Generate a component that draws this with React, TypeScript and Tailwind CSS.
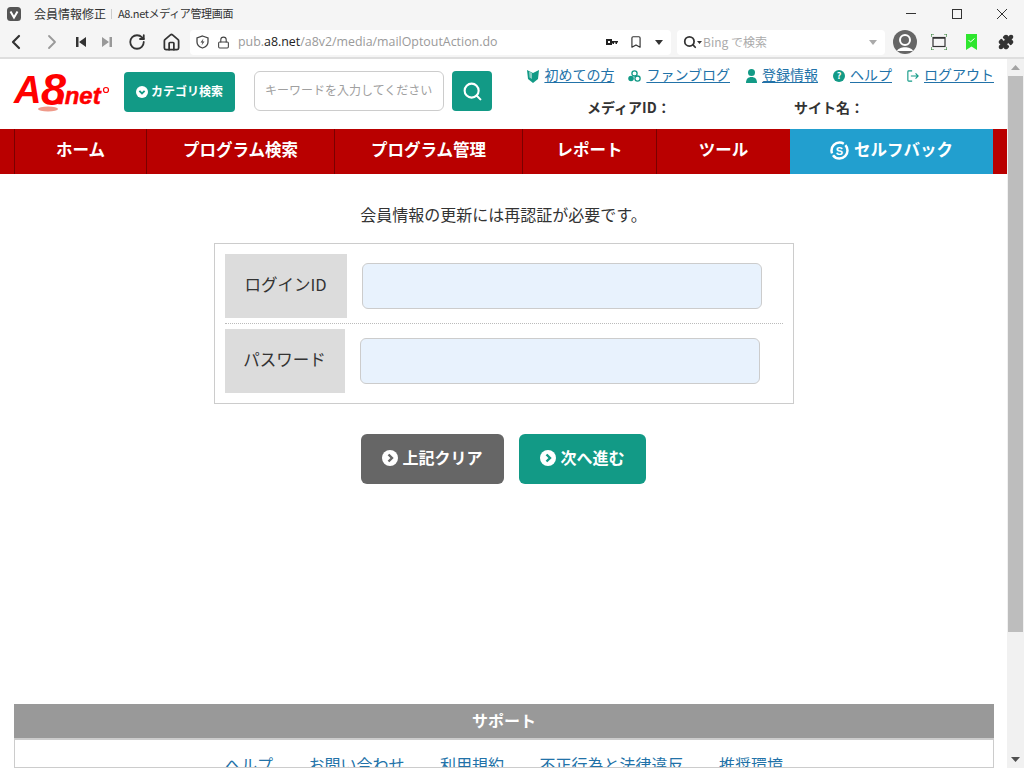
import { ChevronLeft, ChevronRight, Home, RotateCw, Lock, Search, Bookmark, Puzzle } from "lucide-react";

const jp = { fontFamily: '"Noto Sans CJK JP", "Noto Sans", sans-serif' };

const navItems = [
  { label: "ホーム", width: "w-[132px]" },
  { label: "プログラム検索", width: "w-[188px]" },
  { label: "プログラム管理", width: "w-[188px]" },
  { label: "レポート", width: "w-[134px]" },
  { label: "ツール", width: "w-[134px]" },
];

const CircleChevron = ({ down, size = 16, color }: { down?: boolean; size?: number; color: string }) => (
  <svg width={size} height={size} viewBox="0 0 16 16" className="shrink-0">
    <circle cx="8" cy="8" r="8" fill="#fff" />
    <path d={down ? "M4.5 6.5 8 10l3.5-3.5" : "M6.5 4.5 10 8l-3.5 3.5"} fill="none" stroke={color} strokeWidth="2.4" />
  </svg>
);

const BrowserBar = () => (
  <div className="h-[59px] shrink-0 bg-[#f5f5f5] border-b-2 border-[#dedede] flex flex-col">
    {/* title row */}
    <div className="h-[29px] pb-[2px] flex items-center relative">
      <svg width="14" height="14" viewBox="0 0 14 14" className="ml-[7px]">
        <rect width="14" height="14" rx="3.5" fill="#555" />
        <path d="M3.5 4.5 7 10.5l3.5-6" fill="none" stroke="#fff" strokeWidth="2" />
      </svg>
      <span className="ml-[13px] text-[12px] text-[#333] leading-none" style={jp}>会員情報修正</span>
      <span className="ml-[5px] h-[10px] w-px bg-[#ccc]" />
      <span className="ml-[6px] text-[11px] tracking-[-0.35px] text-[#333] leading-none" style={jp}>A8.netメディア管理画面</span>
      <div className="ml-auto flex items-center">
        <div className="w-[10px] h-px bg-[#333] mr-[36px]" />
        <div className="w-[10px] h-[10px] border border-[#333] mr-[35px]" />
        <svg width="10" height="10" viewBox="0 0 10 10" className="mr-[17px]">
          <path d="M0 0l10 10M10 0 0 10" stroke="#333" strokeWidth="1" />
        </svg>
      </div>
    </div>
    {/* toolbar */}
    <div className="h-[26px] flex items-center">
      <ChevronLeft size={24} strokeWidth={2.2} className="ml-[4px] text-[#333]" />
      <ChevronRight size={24} strokeWidth={1.8} className="ml-[12px] text-[#999]" />
      <svg width="10" height="12" viewBox="0 0 10 12" className="ml-[12px]">
        <path d="M0 1h2.5v10H0zM10 1v10L3 6z" fill="#333" />
      </svg>
      <svg width="10" height="12" viewBox="0 0 10 12" className="ml-[16px]">
        <path d="M10 1H7.500v10H10zM0 1v10l7-5z" fill="#999" />
      </svg>
      <RotateCw size={18} strokeWidth={2.4} className="ml-[16px] text-[#333]" />
      <Home size={19} strokeWidth={2.2} className="ml-[16px] text-[#333]" />
      <div className="ml-[9px] w-[481px] h-[25px] bg-white rounded flex items-center">
        <svg width="13" height="14" viewBox="0 0 13 14" className="ml-[6px]">
          <path d="M6.500 1 12 3v4c0 3-2.500 5-5.500 6C3.500 12 1 10 1 7V3z" fill="none" stroke="#444" strokeWidth="1.300" />
          <path d="M7.500 3.500 4.500 7.500h2L5.500 10.500l3-4h-2z" fill="#444" />
        </svg>
        <Lock size={13} className="ml-[8px] text-[#444]" />
        <span className="ml-[8px] text-[12.4px] text-[#9a9a9a] leading-none" style={{ fontFamily: '"Open Sans", sans-serif' }}>
          pub.<span className="text-[#222]">a8.net</span>/a8v2/media/mailOptoutAction.do
        </span>
        <svg width="12" height="6" viewBox="0 0 12 6" className="ml-auto">
          <path d="M0 0h6v2h6v1.500h-1V5H9.500V3.500H8V5H6.500V4H6v2H0z" fill="#222" />
          <rect x="2" y="2" width="2" height="2" fill="#fff" />
        </svg>
        <Bookmark size={14} className="ml-[11px] text-[#333]" />
        <svg width="8" height="5" viewBox="0 0 8 5" className="ml-[12px] mr-[8px]"><path d="M0 0h8L4 5z" fill="#333" /></svg>
      </div>
      <div className="ml-[6px] w-[208px] h-[25px] bg-white rounded flex items-center">
        <Search size={14} strokeWidth={3} className="ml-[6px] text-[#333]" />
        <svg width="5" height="3" viewBox="0 0 5 3"><path d="M0 0h5L2.500 3z" fill="#333" /></svg>
        <span className="ml-[1px] text-[12px] text-[#aaa] leading-none" style={jp}>Bing で検索</span>
        <svg width="8" height="5" viewBox="0 0 8 5" className="ml-auto mr-[8px]"><path d="M0 0h8L4 5z" fill="#aaa" /></svg>
      </div>
      <svg width="24" height="24" viewBox="0 0 24 24" className="ml-[8px]">
        <circle cx="12" cy="12" r="12" fill="#666" />
        <circle cx="12" cy="10" r="5" fill="none" stroke="#fff" strokeWidth="2" />
        <path d="M4 21c2-5 14-5 16 0" fill="#fff" />
      </svg>
      <svg width="16" height="16" viewBox="0 0 16 16" className="ml-[14px]">
        <path d="M0 3V0h3M13 0h3v3M16 13v3h-3M3 16H0v-3" fill="none" stroke="#2e7d32" strokeWidth="1.200" />
        <rect x="2" y="3.500" width="12" height="9" fill="none" stroke="#333" strokeWidth="1.200" />
        <path d="M2 4h12" stroke="#333" strokeWidth="1.500" />
      </svg>
      <svg width="11" height="16" viewBox="0 0 11 16" className="ml-[19px]">
        <path d="M0 0h11v16L5.500 12.500 0 16z" fill="#2ee62e" />
        <path d="M2.500 6l2 2 4-3.500" fill="none" stroke="#fff" strokeWidth="1" />
      </svg>
      <Puzzle size={16} fill="#333" className="ml-[21px] text-[#333]" />
    </div>
  </div>
);

const TopLink = ({ icon, label, gap }: { icon: React.ReactNode; label: string; gap: string }) => (
  <span className={`flex items-center ${gap}`}>
    {icon}
    <span className="mb-[3px] ml-[5px] text-[14px] leading-none text-[#2272a8] underline underline-offset-2">{label}</span>
  </span>
);

const Logo = () => (
  <svg width="100" height="44" viewBox="0 0 100 44" className="block overflow-visible">
    <text x="0" y="33" fontSize="38" fontWeight="700" fontStyle="italic" fill="#f00" fontFamily="Liberation Sans, sans-serif">A</text>
    <text x="27" y="35" fontSize="45" fontWeight="700" fontStyle="italic" fill="#f00" fontFamily="Liberation Sans, sans-serif">8</text>
    <ellipse cx="34" cy="39" rx="10" ry="2.500" fill="#ef9a8a" />
    <text x="44" y="34" fontSize="24" fontWeight="700" fontStyle="italic" fill="#f00" stroke="#f00" strokeWidth=".5" fontFamily="Liberation Sans, sans-serif">.net</text>
    <circle cx="92" cy="20" r="2.500" fill="none" stroke="#f00" strokeWidth="1.200" />
  </svg>
);

const Header = () => (
  <div className="h-[70px] flex shrink-0 pl-[14px]">
    <div className="w-[110px] pt-[11px]">
      <Logo />
    </div>
    <div className="mt-[13px] w-[111px] h-[40px] bg-[#129a86] rounded flex items-center justify-center">
      <CircleChevron down size={12} color="#129a86" />
      <span className="ml-[3px] mb-[2px] text-[12px] font-bold text-white leading-none">カテゴリ検索</span>
    </div>
    <div className="ml-[19px] mt-[12px] w-[190px] h-[40px] border border-[#ccc] rounded-md flex items-center pl-[10px] pb-[2px]">
      <span className="text-[12px] text-[#a0a0a0] leading-none whitespace-nowrap">キーワードを入力してください</span>
    </div>
    <div className="ml-[8px] mt-[12px] w-[40px] h-[40px] bg-[#129a86] rounded flex items-center justify-center">
      <Search size={21} strokeWidth={2.4} className="text-white" />
    </div>
    <div className="flex-1 pr-[13px]">
      <div className="h-[36px] flex items-center justify-end pb-[3px]">
        <TopLink
          gap=""
          label="初めての方"
          icon={
            <svg width="12" height="14" viewBox="0 0 12 14">
              <path d="M0 1l6 3v10L1 10zM12 1 6 4v10l5-4z" fill="#129a86" />
              <path d="M2 2.500l3 1.500v6L2.500 8.500z" fill="#fff" opacity=".5" />
            </svg>
          }
        />
        <TopLink
          gap="ml-[14px]"
          label="ファンブログ"
          icon={
            <svg width="13" height="14" viewBox="0 0 15 14">
              <circle cx="7.500" cy="4" r="3" fill="none" stroke="#129a86" strokeWidth="1.500" />
              <circle cx="3.500" cy="10" r="3.200" fill="#129a86" />
              <circle cx="11" cy="10" r="3" fill="none" stroke="#129a86" strokeWidth="1.500" />
            </svg>
          }
        />
        <TopLink
          gap="ml-[16px]"
          label="登録情報"
          icon={
            <svg width="11" height="14" viewBox="0 0 11 14">
              <circle cx="5.500" cy="3.500" r="3.500" fill="#129a86" />
              <path d="M0 14c0-4 2-6 5.500-6S11 10 11 14z" fill="#129a86" />
            </svg>
          }
        />
        <TopLink
          gap="ml-[15px]"
          label="ヘルプ"
          icon={
            <span className="w-[12px] h-[12px] rounded-full bg-[#129a86] text-white text-[9px] font-bold leading-[12px] text-center">?</span>
          }
        />
        <TopLink
          gap="ml-[15px]"
          label="ログアウト"
          icon={
            <svg width="12" height="14" viewBox="0 0 14 14" fill="none" stroke="#129a86" strokeWidth="1.300">
              <path d="M6 1H2a1 1 0 0 0-1 1v10a1 1 0 0 0 1 1h4M4.500 7H13M10 4l3 3-3 3" />
            </svg>
          }
        />
      </div>
      <div className="flex text-[14px] font-bold text-[#333] leading-none mt-[5px]">
        <span className="ml-[95px] w-[207px]">メディアID：</span>
        <span>サイト名：</span>
      </div>
    </div>
  </div>
);

const Nav = () => (
  <div className="h-[45px] bg-[#b90000] flex pl-[14px] shrink-0">
    {navItems.map((item) => (
      <div key={item.label} className={`${item.width} pb-[4px] border-l border-[#7a0000] flex items-center justify-center text-[16.5px] font-bold text-white`}>
        {item.label}
      </div>
    ))}
    <div className="w-[203px] pb-[4px] bg-[#229fcf] flex items-center justify-center text-[16.5px] font-bold text-white">
      <svg width="19" height="19" viewBox="0 0 19 19" className="mr-[5px] mt-[1px]">
        <circle cx="9.500" cy="9.500" r="8" fill="none" stroke="#fff" strokeWidth="2.500" strokeDasharray="20 2 20 2" />
        <text x="9.500" y="13.500" textAnchor="middle" fontSize="11" fontWeight="700" fill="#fff" fontFamily="Liberation Sans, sans-serif">S</text>
      </svg>
      セルフバック
    </div>
  </div>
);

const LoginForm = () => (
  <div className="w-[580px] mx-auto mt-[18px] border border-[#ccc] px-[10px] pt-[10px] pb-[10px]">
    <div className="flex items-center pb-[5px] border-b border-dotted border-[#bbb]">
      <div className="w-[122px] h-[64px] pb-[4px] bg-[#dcdcdc] flex items-center justify-center text-[16.5px] text-[#333]">ログインID</div>
      <div className="ml-[15px] w-[400px] h-[46px] bg-[#e8f2fd] border border-[#ccc] rounded-md" />
    </div>
    <div className="flex items-center pt-[5px]">
      <div className="w-[120px] h-[64px] pb-[4px] bg-[#dcdcdc] flex items-center justify-center text-[16.5px] text-[#333]">パスワード</div>
      <div className="ml-[15px] w-[400px] h-[46px] bg-[#e8f2fd] border border-[#ccc] rounded-md" />
    </div>
  </div>
);

const Footer = () => (
  <div className="ml-[14px] mr-[13px] mt-auto">
    <div className="h-[34px] pb-[2px] bg-[#999] flex items-center justify-center text-[16px] font-bold text-white">サポート</div>
    <div className="h-[30px] border border-[#ccc] border-t-2 flex justify-center gap-[35.5px] pt-[16px] text-[16px] leading-none text-[#2272a8] overflow-hidden">
      <span>ヘルプ</span>
      <span>お問い合わせ</span>
      <span>利用規約</span>
      <span>不正行為と法律違反</span>
      <span>推奨環境</span>
    </div>
  </div>
);

const Scrollbar = () => (
  <div className="w-[17px] shrink-0 bg-[#f1f1f1] flex flex-col items-center">
    <svg width="9" height="5" viewBox="0 0 9 5" className="mt-[6px]"><path d="M0 5h9L4.500 0z" fill="#a3a3a3" /></svg>
    <div className="w-[15px] h-[556px] bg-[#bdbdbd] mt-[6px]" />
    <svg width="9" height="5" viewBox="0 0 9 5" className="mt-auto mb-[6px]"><path d="M0 0h9L4.500 5z" fill="#505050" /></svg>
  </div>
);

export default function App() {
  return (
    <div className="w-[1024px] h-[768px] flex flex-col overflow-hidden bg-white" style={jp}>
      <BrowserBar />
      <div className="flex flex-1 min-h-0">
        <div className="flex-1 flex flex-col min-w-0">
          <Header />
          <Nav />
          <p className="mt-[29px] text-center text-[16px] leading-[22px] text-[#333]">会員情報の更新には再認証が必要です。</p>
          <LoginForm />
          <div className="mt-[30px] flex justify-center gap-[15px]">
            <div className="w-[143px] h-[50px] pb-[2px] bg-[#666] rounded-md flex items-center justify-center text-[16px] font-bold text-white">
              <CircleChevron color="#666" />
              <span className="ml-[4px] mb-[2px]">上記クリア</span>
            </div>
            <div className="w-[127px] h-[50px] pb-[2px] bg-[#129a86] rounded-md flex items-center justify-center text-[16px] font-bold text-white">
              <CircleChevron color="#129a86" />
              <span className="ml-[4px] mb-[2px]">次へ進む</span>
            </div>
          </div>
          <Footer />
        </div>
        <Scrollbar />
      </div>
    </div>
  );
}
